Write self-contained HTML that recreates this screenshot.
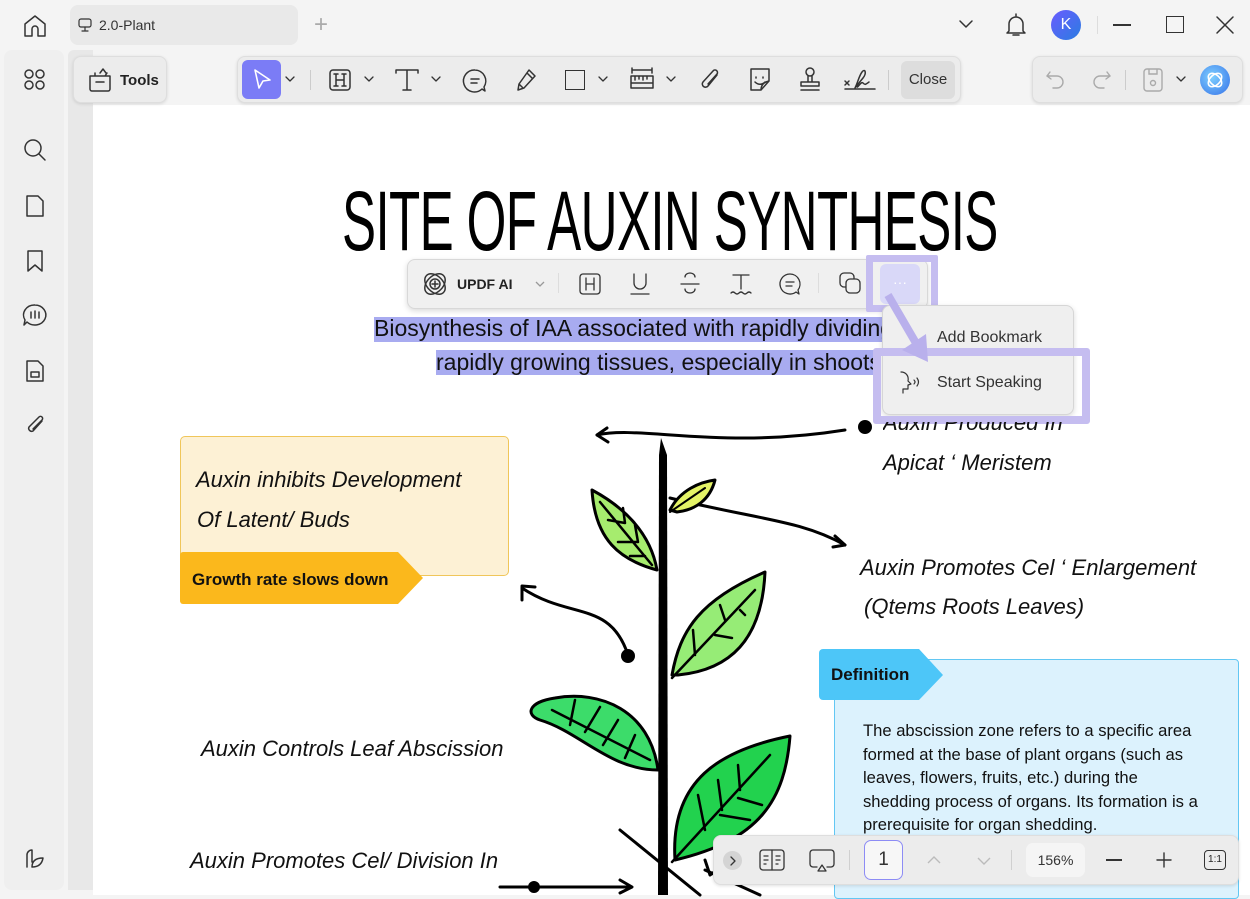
<!DOCTYPE html>
<html><head><meta charset="utf-8"><style>
*{margin:0;padding:0;box-sizing:border-box}
body{width:1250px;height:895px;overflow:hidden;background:#f4f4f4;font-family:"Liberation Sans",sans-serif;position:relative;color:#222}
.a{position:absolute}
svg{overflow:visible}
.ic{stroke:#333;fill:none;stroke-width:1.5;stroke-linecap:round;stroke-linejoin:round}
.bar{background:#ececec;border:1px solid #dedede;border-radius:8px;box-shadow:0 1px 3px rgba(0,0,0,.12)}
.it{font-style:italic;font-size:22px;color:#111;white-space:nowrap}
</style></head><body>
<!-- top bar -->
<svg class="a ic" style="left:22px;top:13px" width="26" height="26" viewBox="0 0 26 26"><path d="M3 11 L13 3 L23 11 V23 H16 V16 a3 3 0 0 0-6 0 V23 H3Z"/></svg>
<div class="a" style="left:70px;top:5px;width:228px;height:40px;background:#e9e9e9;border-radius:8px"></div>
<svg class="a ic" style="left:78px;top:18px;stroke-width:1.2" width="14" height="14"><rect x="1" y="1" width="12" height="8" rx="2"/><path d="M7 9v3M4 13h6"/></svg>
<div class="a" style="left:99px;top:17px;font-size:14px;color:#333">2.0-Plant</div>
<div class="a" style="left:314px;top:11px;font-size:24px;color:#aaa;font-weight:300">+</div>
<svg class="a ic" style="left:958px;top:18px" width="16" height="12"><path d="M2 3l6 6 6-6"/></svg>
<svg class="a ic" style="left:1005px;top:12px" width="22" height="26"><path d="M11 2v2M4 19V12a7 7 0 0 1 14 0v7l2 2H2z M8 23h6"/></svg>
<div class="a" style="left:1051px;top:10px;width:30px;height:30px;border-radius:50%;background:linear-gradient(135deg,#6a5bff,#2a7de1);color:#fff;font-size:16px;text-align:center;line-height:30px">K</div>
<div class="a" style="left:1097px;top:16px;width:1px;height:18px;background:#ddd"></div>
<div class="a" style="left:1113px;top:24px;width:18px;height:1.5px;background:#333"></div>
<div class="a" style="left:1166px;top:16px;width:18px;height:17px;border:1.5px solid #333"></div>
<svg class="a ic" style="left:1216px;top:16px" width="18" height="18"><path d="M1 1l16 16M17 1L1 17"/></svg>
<!-- left sidebar -->
<div class="a" style="left:4px;top:50px;width:60px;height:840px;background:#efefef;border-radius:8px"></div>
<div class="a" style="left:68px;top:50px;width:25px;height:840px;background:#e8e8e8;border-radius:6px 0 0 0"></div>
<svg class="a ic" style="left:24px;top:69px" width="22" height="22"><circle cx="5" cy="5" r="4"/><circle cx="16" cy="5" r="4"/><circle cx="5" cy="16" r="4"/><circle cx="16" cy="16" r="4"/></svg>
<svg class="a ic" style="left:23px;top:138px" width="24" height="24"><circle cx="10" cy="10" r="8"/><path d="M16 16l6 6"/></svg>
<svg class="a ic" style="left:25px;top:194px" width="20" height="24"><path d="M2 2h11l5 5v15H2z"/></svg>
<svg class="a ic" style="left:26px;top:249px" width="18" height="24"><path d="M2 2h14v20l-7-6-7 6z"/></svg>
<svg class="a ic" style="left:22px;top:303px" width="26" height="24"><path d="M13 2a11 10 0 1 1-8 17l-3 3 1-5A11 10 0 0 1 13 2zM9 9v6M13 8v7M17 9v6"/></svg>
<svg class="a ic" style="left:25px;top:359px" width="20" height="24"><path d="M2 2h11l5 5v15H2z M6 13h8v5H6z"/></svg>
<svg class="a ic" style="left:25px;top:413px" width="22" height="26"><path d="M17 8L8 18a3 3 0 0 1-4-4L14 4a2 2 0 0 1 3 3L8 16"/></svg>
<svg class="a ic" style="left:24px;top:848px" width="22" height="22"><path d="M3 19V7a5 5 0 0 1 5-5v12M8 19c0-6 4-9 11-9-1 6-5 9-11 9z"/></svg>
<!-- page -->
<div class="a" style="left:93px;top:105px;width:1157px;height:790px;background:#fff"></div>
<!-- toolbars -->
<div class="a bar" style="left:73px;top:56px;width:94px;height:47px"></div>
<svg class="a ic" style="left:87px;top:67px" width="26" height="26"><path d="M3 9h20v13a2 2 0 0 1-2 2H5a2 2 0 0 1-2-2z M9 15h8 M8 9V6 M13 6l3-4 3 4 M18 9l2-3"/></svg>
<div class="a" style="left:120px;top:72px;font-size:15px;font-weight:bold">Tools</div>
<div class="a bar" style="left:237px;top:56px;width:724px;height:47px"></div>
<div class="a" style="left:242px;top:60px;width:39px;height:39px;background:#7b7cf6;border-radius:6px"></div>
<svg class="a" style="left:252px;top:68px" width="20" height="24"><path d="M3 2l15 10-7 1-4 7z" fill="none" stroke="#fff" stroke-width="1.6" stroke-linejoin="round"/></svg>
<svg class="a ic" style="left:285px;top:76px;stroke-width:1.3" width="10" height="7"><path d="M1 1l4 4 4-4"/></svg>
<div class="a" style="left:310px;top:70px;width:1px;height:20px;background:#ccc"></div>
<svg class="a ic" style="left:328px;top:68px" width="24" height="24"><rect x="2" y="2" width="20" height="20" rx="3"/><path d="M8 6v12M16 6v12M8 12h8M6 6h4M14 6h4M6 18h4M14 18h4"/></svg>
<svg class="a ic" style="left:364px;top:76px;stroke-width:1.3" width="10" height="7"><path d="M1 1l4 4 4-4"/></svg>
<svg class="a ic" style="left:394px;top:68px" width="26" height="24"><path d="M2 5V2h22v3M13 2v20M9 22h8"/></svg>
<svg class="a ic" style="left:431px;top:76px;stroke-width:1.3" width="10" height="7"><path d="M1 1l4 4 4-4"/></svg>
<svg class="a ic" style="left:462px;top:68px" width="26" height="26"><path d="M13 2a11 11 0 1 0 7 19l3 2-1-4A11 11 0 0 0 13 2zM9 11h8M9 15h6"/></svg>
<svg class="a ic" style="left:514px;top:67px" width="24" height="26"><path d="M15 3l6 6-11 12-6 2 1-6z M5 17l4 4 M13 6l5 5"/></svg>
<div class="a" style="left:565px;top:70px;width:20px;height:20px;border:1.5px solid #333"></div>
<svg class="a ic" style="left:598px;top:76px;stroke-width:1.3" width="10" height="7"><path d="M1 1l4 4 4-4"/></svg>
<svg class="a ic" style="left:629px;top:66px" width="26" height="28"><path d="M3 2v5M23 2v5M3 4h20 M2 10h22v12H2z M6 10v4M10 10v3M14 10v4M18 10v3 M2 17h22"/></svg>
<svg class="a ic" style="left:666px;top:76px;stroke-width:1.3" width="10" height="7"><path d="M1 1l4 4 4-4"/></svg>
<svg class="a ic" style="left:699px;top:67px" width="24" height="26"><path d="M18 8L9 19a3 3 0 0 1-5-4L14 4a2 2 0 0 1 4 3L9 17"/></svg>
<svg class="a ic" style="left:747px;top:67px" width="26" height="26"><path d="M4 2h18v12l-8 9H4z M9 10v1M16 10v1M8 15c3 3 7 3 10 0 M14 23c0-5 3-8 8-9"/></svg>
<svg class="a ic" style="left:798px;top:66px" width="24" height="28"><circle cx="12" cy="6" r="4"/><path d="M10 10v6h4v-6 M3 16h18v4H3z M3 24h18"/></svg>
<svg class="a ic" style="left:843px;top:66px" width="34" height="28"><path d="M2 15l4 4M6 15l-4 4 M12 22c3-6 4-12 7-16s5 1 1 6-7 8-6 9 4-6 6-4 2 2 6-1 M2 23h30"/></svg>
<div class="a" style="left:888px;top:70px;width:1px;height:20px;background:#ccc"></div>
<div class="a" style="left:901px;top:61px;width:54px;height:38px;background:#dddddd;border-radius:6px;font-size:15px;color:#333;text-align:center;line-height:38px">Close</div>
<div class="a bar" style="left:1032px;top:56px;width:211px;height:47px"></div>
<svg class="a" style="left:1045px;top:70px;stroke:#aaa;fill:none;stroke-width:1.4;stroke-linecap:round" width="22" height="20"><path d="M5 2L2 6l4 3M2 6h10a6 6 0 0 1 0 12H8"/></svg>
<svg class="a" style="left:1090px;top:70px;stroke:#aaa;fill:none;stroke-width:1.4;stroke-linecap:round" width="22" height="20"><path d="M17 2l3 4-4 3M20 6H10a6 6 0 0 0 0 12h4"/></svg>
<div class="a" style="left:1125px;top:70px;width:1px;height:20px;background:#ccc"></div>
<svg class="a" style="left:1142px;top:67px;stroke:#aaa;fill:none;stroke-width:1.4" width="22" height="26"><rect x="2" y="2" width="18" height="22" rx="3"/><path d="M7 2v5h8V2"/><circle cx="11" cy="16" r="2.5"/></svg>
<svg class="a ic" style="left:1176px;top:76px;stroke-width:1.3" width="10" height="7"><path d="M1 1l4 4 4-4"/></svg>
<div class="a" style="left:1200px;top:65px;width:30px;height:30px;border-radius:50%;background:radial-gradient(circle at 40% 40%,#7fd0ff,#3470e8)"></div>
<svg class="a" style="left:1204px;top:69px;stroke:#fff;fill:none;stroke-width:1.6" width="22" height="22"><ellipse cx="11" cy="11" rx="8" ry="5" transform="rotate(45 11 11)"/><ellipse cx="11" cy="11" rx="8" ry="5" transform="rotate(-45 11 11)"/></svg>

<!-- title -->
<div class="a" style="left:342px;top:176px;font-size:84px;line-height:90px;color:#000;white-space:nowrap;transform:scaleX(.608);transform-origin:0 0;letter-spacing:-1px">SITE OF AUXIN SYNTHESIS</div>

<!-- highlighted text -->
<div class="a" style="left:374px;top:317px;height:25px;width:510px;background:#a8abf0"></div>
<div class="a" style="left:436px;top:350px;height:25px;width:445px;background:#a8abf0"></div>
<div class="a" style="left:374px;top:315px;font-size:23px;color:#111;white-space:nowrap">Biosynthesis of IAA associated with rapidly dividing</div>
<div class="a" style="left:436px;top:349px;font-size:23px;color:#111;white-space:nowrap">rapidly growing tissues, especially in shoots</div>

<!-- floating toolbar -->
<div class="a" style="left:407px;top:259px;width:521px;height:50px;background:#f0f0f0;border:1px solid #d8d8d8;border-radius:8px;box-shadow:0 2px 6px rgba(0,0,0,.15)"></div>
<svg class="a ic" style="left:420px;top:269px" width="30" height="30"><ellipse cx="15" cy="15" rx="12" ry="8" transform="rotate(45 15 15)"/><ellipse cx="15" cy="15" rx="12" ry="8" transform="rotate(-45 15 15)"/><circle cx="15" cy="15" r="5"/><path d="M15 12v6M12 15h6"/></svg>
<div class="a" style="left:457px;top:276px;font-size:14px;font-weight:bold">UPDF AI</div>
<svg class="a" style="left:535px;top:281px;stroke:#999;fill:none;stroke-width:1.3" width="10" height="7"><path d="M1 1l4 4 4-4"/></svg>
<div class="a" style="left:558px;top:273px;width:1px;height:20px;background:#ddd"></div>
<svg class="a ic" style="left:579px;top:273px;stroke-width:1.3" width="22" height="22"><rect x="1" y="1" width="20" height="20" rx="3"/><path d="M7 5v12M15 5v12M7 11h8"/></svg>
<svg class="a ic" style="left:630px;top:272px;stroke-width:1.3" width="20" height="24"><path d="M4 2v9a6 6 0 0 0 12 0V2M1 22h18"/></svg>
<svg class="a ic" style="left:680px;top:272px;stroke-width:1.3" width="20" height="24"><path d="M15 5a5 4 0 0 0-10 0M5 17a5 4 0 0 0 10 0M1 12h18"/></svg>
<svg class="a ic" style="left:730px;top:272px;stroke-width:1.3" width="22" height="24"><path d="M3 3h16M11 3v14M1 21q2-2 4 0t4 0 4 0 4 0 4 0"/></svg>
<svg class="a ic" style="left:778px;top:272px;stroke-width:1.3" width="24" height="24"><path d="M12 2a10 10 0 1 0 6 18l3 2-1-4A10 10 0 0 0 12 2zM8 10h8M8 14h6"/></svg>
<div class="a" style="left:818px;top:273px;width:1px;height:20px;background:#ddd"></div>
<svg class="a ic" style="left:838px;top:271px;stroke-width:1.3" width="26" height="26"><rect x="2" y="2" width="14" height="14" rx="4"/><rect x="8" y="8" width="14" height="14" rx="4" fill="#f0f0f0"/></svg>
<div class="a" style="left:866px;top:255px;width:72px;height:57px;border:7px solid #c5bdf0;border-radius:2px"></div>
<div class="a" style="left:880px;top:264px;width:40px;height:40px;background:#d9d8f8;border-radius:6px;color:#fff;text-align:center;font-size:14px;line-height:36px">···</div>
<!-- dropdown -->
<div class="a" style="left:882px;top:305px;width:192px;height:110px;background:#efefef;border:1px solid #d6d6d6;border-radius:8px;box-shadow:0 2px 6px rgba(0,0,0,.15)"></div>
<div class="a" style="left:937px;top:329px;font-size:16px;color:#333">Add Bookmark</div>
<div class="a" style="left:873px;top:348px;width:217px;height:76px;border:8px solid #c5bdf0;border-radius:3px"></div>
<svg class="a ic" style="left:898px;top:370px;stroke-width:1.2" width="28" height="26"><path d="M3 2c5 0 8 4 7 9l3 3-3 1v4H5v4 M16 10q2 2 0 4M19 8q3 4 0 8"/></svg>
<div class="a" style="left:937px;top:374px;font-size:16px;color:#333">Start Speaking</div>
<svg class="a" style="left:880px;top:290px" width="60" height="80"><path d="M8 5 L40 60" stroke="#b9b0ec" stroke-width="8"/><path d="M22 60 L48 72 L46 44z" fill="#b9b0ec"/></svg>

<!-- yellow box -->
<div class="a" style="left:180px;top:436px;width:329px;height:140px;background:#fdf1d5;border:1px solid #f0c65a;border-radius:5px"></div>
<div class="a it" style="left:196px;top:467px">Auxin inhibits Development</div>
<div class="a it" style="left:197px;top:507px">Of Latent/ Buds</div>
<svg class="a" style="left:180px;top:552px" width="245" height="54"><path d="M0 3a3 3 0 0 1 3-3H218L243 26 218 52H3a3 3 0 0 1-3-3z" fill="#fbb81c"/></svg>
<div class="a" style="left:192px;top:570px;font-size:17px;font-weight:bold;color:#111">Growth rate slows down</div>

<div class="a it" style="left:883px;top:410px;clip-path:inset(12px 0 0 0)">Auxin Produced In</div>
<div class="a it" style="left:883px;top:450px">Apicat ‘ Meristem</div>
<div class="a it" style="left:860px;top:555px">Auxin Promotes Cel ‘ Enlargement</div>
<div class="a it" style="left:864px;top:594px">(Qtems Roots Leaves)</div>
<div class="a it" style="left:201px;top:736px">Auxin Controls Leaf Abscission</div>
<div class="a it" style="left:190px;top:848px">Auxin Promotes Cel/ Division In</div>

<!-- definition box -->
<div class="a" style="left:834px;top:659px;width:405px;height:240px;background:#dcf2fd;border:1px solid #62c7f3;border-radius:4px"></div>
<svg class="a" style="left:819px;top:649px" width="126" height="52"><path d="M0 4a4 4 0 0 1 4-4H100L124 26 100 51H4a4 4 0 0 1-4-4z" fill="#4dc6f8"/></svg>
<div class="a" style="left:831px;top:665px;font-size:17px;font-weight:bold;color:#111">Definition</div>
<div class="a" style="left:863px;top:719px;font-size:16.6px;line-height:23.5px;color:#111;width:338px">The abscission zone refers to a specific area formed at the base of plant organs (such as leaves, flowers, fruits, etc.) during the shedding process of organs. Its formation is a prerequisite for organ shedding.</div>

<!-- plant -->
<svg class="a" style="left:500px;top:420px" width="350" height="475" viewBox="0 0 350 475">
<g stroke="#000" stroke-width="3" fill="none" stroke-linecap="round" stroke-linejoin="round">
<path d="M97 15 C140 5 220 30 345 10"/><path d="M107 8 L97 15 L108 22"/>
<path d="M170 78 C260 100 300 100 345 125"/><path d="M335 116 L345 125 L333 127"/>
<path d="M128 235 C110 180 70 200 22 168"/><path d="M22 180 L22 166 L35 167"/>
<path d="M0 467 L130 467"/><path d="M120 460 L132 467 L120 473"/>
<path d="M120 410 L200 475"/><path d="M205 450 L260 475"/><path d="M210 455 L205 440 M210 455 L220 448"/>
</g>
<circle cx="128" cy="236" r="7"/><circle cx="34" cy="467" r="6"/>
<path d="M161 18 L167 35 L168 475 L158 475 L159 35z" fill="#000"/>
<g stroke="#000" stroke-width="3" stroke-linejoin="round" stroke-linecap="round">
<path d="M157 150 C120 140 95 120 92 70 C120 85 150 110 157 150z" fill="#a6ec6e"/>
<path d="M100 82 L152 145 M108 100 L125 103 M125 103 L123 88 M118 122 L138 122 M138 122 L135 105 M130 136 L145 136" fill="none" stroke-width="2.5"/>
<path d="M170 90 C180 70 200 62 215 60 C210 80 195 90 177 92z" fill="#e4f366"/>
<path d="M170 92 L205 68" fill="none" stroke-width="2"/>
<path d="M172 255 C180 210 200 180 265 152 C262 220 230 250 178 255z" fill="#96ec76"/>
<path d="M172 258 L255 170 M195 235 L193 210 M215 215 L232 218 M225 200 L220 185 M240 190 L245 195" fill="none" stroke-width="2.5"/>
<path d="M158 350 C150 290 100 270 55 278 C28 282 25 295 40 300 C80 312 110 350 158 350z" fill="#3cdc6a"/>
<path d="M52 290 L150 340 M75 280 L70 305 M100 287 L85 312 M118 300 L103 325 M135 315 L125 338" fill="none" stroke-width="2.5"/>
<path d="M175 440 C170 360 220 330 290 316 C285 380 260 420 175 440z" fill="#22d24e"/>
<path d="M172 442 L270 335 M205 410 L198 375 M222 390 L218 360 M240 370 L238 345 M220 395 L250 400 M238 378 L262 385" fill="none" stroke-width="2.5"/>
</g>
</svg>
<div class="a" style="left:858px;top:420px;width:14px;height:14px;border-radius:50%;background:#000"></div>

<!-- bottom bar -->
<div class="a bar" style="left:713px;top:835px;width:526px;height:50px;border-radius:8px"></div>
<div class="a" style="left:723px;top:851px;width:19px;height:19px;border-radius:50%;background:#d4d4d4"></div>
<svg class="a ic" style="left:729px;top:856px;stroke-width:1.3" width="8" height="10"><path d="M2 1l4 4-4 4"/></svg>
<svg class="a ic" style="left:759px;top:849px;stroke-width:1.3" width="26" height="22"><rect x="1" y="1" width="24" height="20" rx="3"/><path d="M13 1v20M5 7h4M5 11h4M5 15h2M17 7h4M17 11h4M17 15h2"/></svg>
<svg class="a ic" style="left:809px;top:849px;stroke-width:1.3" width="26" height="24"><path d="M8 18H4a3 3 0 0 1-3-3V4a3 3 0 0 1 3-3h18a3 3 0 0 1 3 3v11a3 3 0 0 1-3 3h-4 M13 16l-4 6h8z"/></svg>
<div class="a" style="left:849px;top:850px;width:1px;height:20px;background:#d0d0d0"></div>
<div class="a" style="left:864px;top:840px;width:39px;height:40px;border:1.5px solid #8d8cf5;border-radius:7px;background:#f7f7f7;font-size:19px;text-align:center;line-height:37px;color:#333">1</div>
<svg class="a" style="left:926px;top:855px;stroke:#bbb;fill:none;stroke-width:1.4" width="16" height="10"><path d="M2 8l6-6 6 6"/></svg>
<svg class="a" style="left:976px;top:856px;stroke:#bbb;fill:none;stroke-width:1.4" width="16" height="10"><path d="M2 2l6 6 6-6"/></svg>
<div class="a" style="left:1011px;top:850px;width:1px;height:20px;background:#d0d0d0"></div>
<div class="a" style="left:1026px;top:843px;width:59px;height:34px;background:#f5f5f5;border-radius:7px;font-size:14px;text-align:center;line-height:34px;color:#333">156%</div>
<div class="a" style="left:1106px;top:859px;width:16px;height:1.5px;background:#333"></div>
<svg class="a ic" style="left:1156px;top:852px;stroke-width:1.4" width="16" height="16"><path d="M8 1v14M1 8h14"/></svg>
<div class="a" style="left:1204px;top:850px;width:22px;height:20px;border:1.4px solid #333;border-radius:4px;font-size:10px;text-align:center;line-height:18px">1:1</div>
</body></html>
